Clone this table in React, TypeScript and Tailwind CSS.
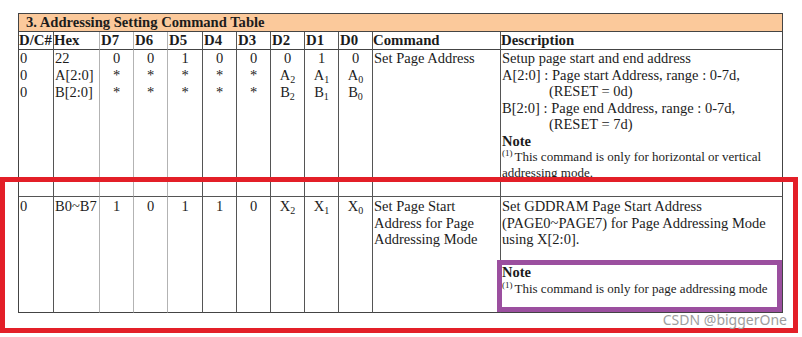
import React from 'react';

const cols = [
    { w: 'D/C#', line: 'border-[#555]' },
    { w: 'Hex', line: 'border-[#b3b3b3]' },
    { w: 'D7', line: 'border-[#b3b3b3]' },
    { w: 'D6', line: 'border-[#b3b3b3]' },
    { w: 'D5', line: 'border-[#555]' },
    { w: 'D4', line: 'border-[#555]' },
    { w: 'D3', line: 'border-[#555]' },
    { w: 'D2', line: 'border-[#555]' },
    { w: 'D1', line: 'border-[#555]' },
    { w: 'D0', line: 'border-[#555]' },
    { w: 'Command', line: 'border-[#555]' },
    { w: 'Description', line: 'border-[#444]' },
];

const Sub: React.FC<{ base: string; n: string }> = ({ base, n }) => (
    <span>
        {base}
        <span className="relative top-[3px] text-[10px]">{n}</span>
    </span>
);

const Sup: React.FC<{ children: React.ReactNode }> = ({ children }) => (
    <span className="relative -top-[5px] text-[9px] mr-[2px]">{children}</span>
);

const bits1 = [
    ['0', '*', '*'],
    ['0', '*', '*'],
    ['1', '*', '*'],
    ['0', '*', '*'],
    ['0', '*', '*'],
];

const App: React.FC = () => {
    const bitCell = (lines: React.ReactNode[]) => (
        <div className="flex flex-col items-center">
            {lines.map((l, i) => (
                <div key={i} className="h-[17px]">{l}</div>
            ))}
        </div>
    );

    const row1: React.ReactNode[] = [
        <div className="pl-[1px]"><div className="h-[17px]">0</div><div className="h-[17px]">0</div><div className="h-[17px]">0</div></div>,
        <div className="pl-[1px]"><div className="h-[17px]">22</div><div className="h-[17px]">A[2:0]</div><div className="h-[17px]">B[2:0]</div></div>,
        ...bits1.map((b) => bitCell(b)),
        bitCell(['0', <Sub base="A" n="2" />, <Sub base="B" n="2" />]),
        bitCell(['1', <Sub base="A" n="1" />, <Sub base="B" n="1" />]),
        bitCell(['0', <Sub base="A" n="0" />, <Sub base="B" n="0" />]),
        <div className="pl-[1px] leading-[16.5px]">Set Page Address</div>,
        <div className="pl-[1px] leading-[16.5px] whitespace-nowrap">
            <div>Setup page start and end address</div>
            <div>A[2:0] : Page start Address, range : 0-7d,</div>
            <div className="pl-[47px]">(RESET = 0d)</div>
            <div>B[2:0] : Page end Address, range : 0-7d,</div>
            <div className="pl-[47px]">(RESET = 7d)</div>
            <div className="font-bold leading-[16px]">Note</div>
            <div className="text-[13px] leading-[15px]"><Sup>(1)</Sup>This command is only for horizontal or vertical</div>
            <div className="text-[13px] leading-[14px]">addressing mode.</div>
        </div>,
    ];

    const row2: React.ReactNode[] = [
        <div className="pl-[1px]">0</div>,
        <div className="pl-[1px]">B0~B7</div>,
        bitCell(['1']),
        bitCell(['0']),
        bitCell(['1']),
        bitCell(['1']),
        bitCell(['0']),
        bitCell([<Sub base="X" n="2" />]),
        bitCell([<Sub base="X" n="1" />]),
        bitCell([<Sub base="X" n="0" />]),
        <div className="pl-[1px] leading-[16.5px]">
            <div>Set Page Start</div>
            <div>Address for Page</div>
            <div>Addressing Mode</div>
        </div>,
        <div className="pl-[1px] leading-[16.5px] whitespace-nowrap">
            <div>Set GDDRAM Page Start Address</div>
            <div>(PAGE0~PAGE7) for Page Addressing Mode</div>
            <div>using X[2:0].</div>
            <div>&nbsp;</div>
            <div className="font-bold">Note</div>
            <div className="text-[13px]"><Sup>(1)</Sup>This command is only for page addressing mode</div>
        </div>,
    ];

    return (
        <div className="relative w-[802px] h-[337px] bg-white overflow-hidden text-[#1c1c1c] font-['Liberation_Serif',serif] text-[14.5px]">
            <div className="ml-[18px] pt-[13px] w-[765px]">
                <div className="border-l border-t border-[#444]">
                    {/* title bar */}
                    <div className="h-[18px] bg-[#fbc99b] border-r border-b border-[#444] pl-[7px] font-bold text-[14.6px] leading-[17px]">
                        3. Addressing Setting Command Table
                    </div>
                    <div className="grid grid-cols-[35px_46px_34px_34px_35px_34px_34px_34px_34px_34px_128px_282px]">
                        {/* header */}
                        {cols.map((c, i) => (
                            <div key={'h' + i} className={`h-[18px] border-b border-b-[#444] border-r ${c.line} font-bold text-[14.8px] leading-[17px] whitespace-nowrap ${i >= 2 && i <= 9 ? 'pl-[1px]' : 'pl-[0px]'}`}>
                                {c.w}
                            </div>
                        ))}
                        {/* row 1 */}
                        {row1.map((c, i) => (
                            <div key={'a' + i} className={`h-[129px] border-b border-b-[#555] border-r ${cols[i].line} leading-[17px]`}>
                                {c}
                            </div>
                        ))}
                        {/* spacer */}
                        {cols.map((c, i) => (
                            <div key={'s' + i} className={`h-[18px] border-b border-b-[#555] border-r ${c.line}`} />
                        ))}
                        {/* row 2 */}
                        {row2.map((c, i) => (
                            <div key={'b' + i} className={`h-[116px] pt-[1px] border-b border-b-[#444] border-r ${cols[i].line} leading-[16.5px]`}>
                                {c}
                            </div>
                        ))}
                    </div>
                </div>
            </div>

            {/* highlight boxes */}
            <div className="absolute left-0 top-[177px] w-[798px] h-[156px] border-[5px] border-[#e31f28]" />
            <div className="absolute left-[497px] top-[260px] w-[285px] h-[52px] border-[5px] border-[#9b4f9f]" />

            <div className="absolute right-[15px] top-[310px] text-[14px] leading-[19px] text-[#9d9d9d] font-['Noto_Sans',sans-serif]">
                CSDN @biggerOne
            </div>
        </div>
    );
};

export default App;
